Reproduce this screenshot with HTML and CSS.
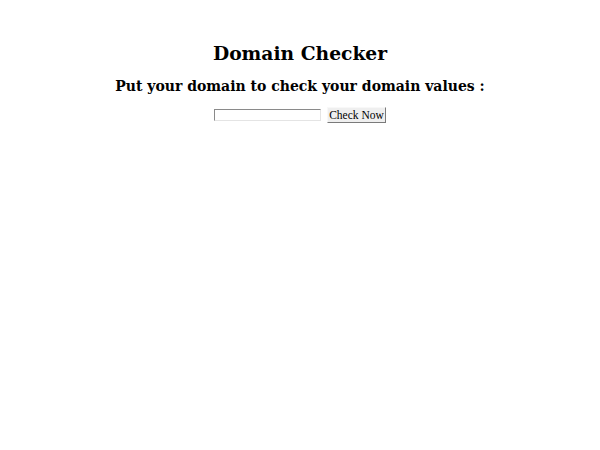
FILE: index.html
```html
<!DOCTYPE html>
<html>
<head>
<meta charset="utf-8">
<link rel="stylesheet" href="styles.css">
</head>
<body>
<div class="page">
  <h1 class="title">Domain Checker</h1>
  <h2 class="subtitle">Put your domain to check your domain values :</h2>
  <form class="checker">
    <input class="domain" type="text">
    <button class="check" type="button">Check Now</button>
  </form>
</div>
</body>
</html>
```
FILE: styles.css
```css
html, body {
  margin: 0;
  padding: 0;
  background: #ffffff;
}
.page {
  padding: 8px;
  text-align: center;
  font-family: "DejaVu Serif", serif;
  color: #000;
}
.title {
  font-size: 18.7px;
  font-weight: bold;
  margin: 33px 0 0 0;
  line-height: 24px;
}
.subtitle {
  font-size: 14px;
  font-weight: bold;
  margin: 11px 0 0 0;
  line-height: 20px;
}
.checker {
  margin: 11px 0 0 0;
  display: flex;
  justify-content: center;
  align-items: center;
  gap: 6px;
}
.domain {
  box-sizing: border-box;
  width: 107px;
  height: 12px;
  padding: 0;
  border: 1px solid;
  border-color: #8a8a8a #e4e4e4 #e4e4e4 #8a8a8a;
  background: #fff;
  margin: 0;
}
.check {
  box-sizing: border-box;
  font-family: "Liberation Serif", serif;
  font-size: 11.5px;
  width: 59px;
  height: 16px;
  padding: 0;
  margin: 0;
  background: #efefef;
  border: 1px solid;
  border-color: #f8f8f8 #7a7a7a #7a7a7a #f8f8f8;
  color: #000;
  line-height: 14px;
}
```
